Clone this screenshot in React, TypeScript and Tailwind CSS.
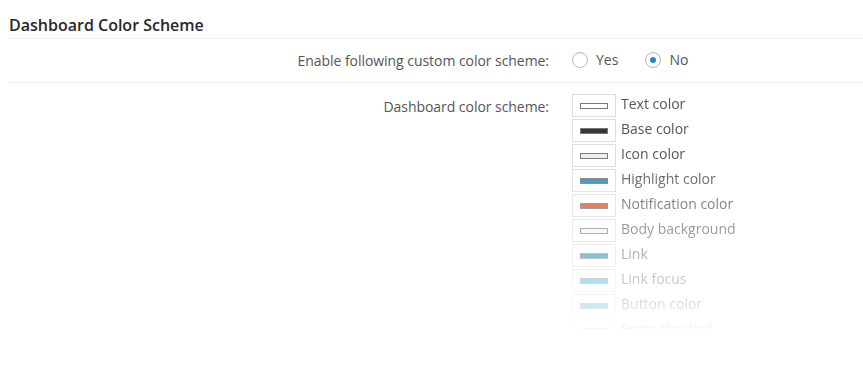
import React from 'react';

type Swatch = { label: string; color: string };

const swatches: Swatch[] = [
  { label: 'Text color', color: '#ffffff' },
  { label: 'Base color', color: '#32373c' },
  { label: 'Icon color', color: '#eeeeee' },
  { label: 'Highlight color', color: '#2a86bb' },
  { label: 'Notification color', color: '#d54e21' },
  { label: 'Body background', color: '#f1f1f1' },
  { label: 'Link', color: '#0073aa' },
  { label: 'Link focus', color: '#00a0d2' },
  { label: 'Button color', color: '#0085ba' },
  { label: 'Form checked', color: '#7e8993' },
];

function Radio({ checked, label }: { checked?: boolean; label: string }) {
  return (
    <label className="flex items-start cursor-pointer">
      <span className="w-4 h-4 rounded-full border border-[#b4b9be] bg-white shadow-[inset_0_1px_2px_rgba(0,0,0,0.07)] flex items-center justify-center">
        {checked && <span className="w-[6px] h-[6px] rounded-full bg-[#1e8cbe]" />}
      </span>
      <span className="ml-2 leading-5 -mt-[2px]">{label}</span>
    </label>
  );
}

export default function App() {
  return (
    <div className="bg-white w-[863px] h-[369px] font-['Open_Sans',sans-serif] text-[14px] text-[#555]">
      <div className="ml-2">
        <h2 className="pt-[14px] pb-[2px] pl-px text-[16px] leading-[22px] font-semibold text-[#23282d] border-b border-[#eeeeee]">
          Dashboard Color Scheme
        </h2>

        <div className="flex pt-[12px] pb-[11px] border-b border-[#eeeeee]">
          <div className="w-[541px] text-right leading-5 tracking-[-0.05px]">Enable following custom color scheme:</div>
          <div className="ml-[23px] flex items-start pt-[1px]">
            <div className="mr-[27px]">
              <Radio label="Yes" />
            </div>
            <Radio label="No" checked />
          </div>
        </div>

        <div className="flex pt-[10px]">
          <div className="w-[541px] text-right leading-5 pt-[4px] tracking-[-0.05px]">Dashboard color scheme:</div>
          <div className="ml-[23px] h-[236px] overflow-hidden [mask-image:linear-gradient(to_bottom,black_25%,rgba(0,0,0,0.07)_100%)]">
            {swatches.map((s) => (
              <div key={s.label} className="flex items-start h-[25px]">
                <span className="mt-px w-[44px] h-[23px] border border-[#dddddd] bg-white flex items-center justify-center">
                  <span className="w-[28px] h-[6px] border border-[#777777]" style={{ backgroundColor: s.color }} />
                </span>
                <span className="ml-[5px] leading-5 mt-px">{s.label}</span>
              </div>
            ))}
          </div>
        </div>
      </div>
    </div>
  );
}
